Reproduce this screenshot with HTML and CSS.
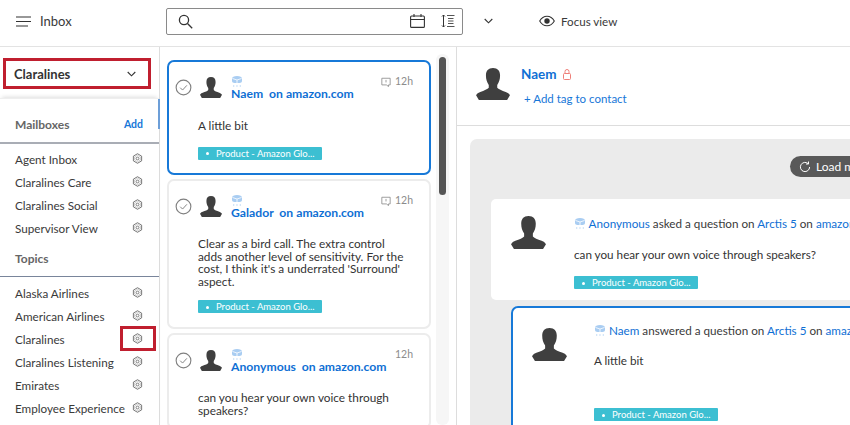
FILE: index.html
```html
<!DOCTYPE html>
<html lang="en">
<head>
<meta charset="utf-8">
<title>Inbox</title>
<link rel="stylesheet" href="styles.css">
</head>
<body>
<svg class="defs" width="0" height="0">
  <defs>
    <symbol id="avatar" viewBox="0 0 36 34">
      <path d="M18 0c5 0 7.500 3 7.500 8 0 4-1 7-3 10v3c1 1.500 5 3 9 4.500 1.500.6 3 1 4.500 3.500l-3 5H3l-3-5c1.500-2.500 3-3 4.500-3.500 4-1.500 8-3 9-4.500v-3c-2-3-3-6-3-10C10.500 3 13 0 18 0z" fill="#3f3f3f"/>
    </symbol>
    <symbol id="gear" viewBox="0 0 12 12">
      <path d="M6 .8l4.500 2.600v5.200L6 11.200 1.500 8.600V3.400z" fill="none" stroke="#6b6b6b" stroke-width="1"/>
      <path d="M6 2.400l3.100 1.800v3.600L6 9.600 2.900 7.800V4.200z" fill="none" stroke="#a5a5a5" stroke-width=".6"/>
      <circle cx="6" cy="6" r="1.500" fill="none" stroke="#6b6b6b" stroke-width=".9"/>
    </symbol>
    <symbol id="cube" viewBox="0 0 12 12">
      <path d="M1 3.500C1 2 3 1 6 1s5 1 5 2.500V6c0 1-1 2-2.500 2h-5C2 8 1 7 1 6z" fill="#a9cdf2"/>
      <path d="M1.500 3.500L6 5l4.500-1.500M6 5v3" fill="none" stroke="#fff" stroke-width=".8"/>
      <path d="M2 11h1.300M5.300 11h1.300M8.700 11H10" stroke="#a9cdf2" stroke-width="1.200"/>
    </symbol>
    <symbol id="check" viewBox="0 0 18 18">
      <circle cx="9" cy="9" r="7.800" fill="none" stroke="#808080" stroke-width="1.200"/>
      <path d="M5.500 9.200l2.500 2.500 4.600-5" fill="none" stroke="#808080" stroke-width="1"/>
    </symbol>
    <symbol id="comment" viewBox="0 0 12 12">
      <path d="M1 1.500h10v8H9v2l-2.500-2H1z" fill="none" stroke="#8c8c8c" stroke-width="1"/>
      <path d="M6 3.500v3" stroke="#8c8c8c" stroke-width="1"/>
    </symbol>
  </defs>
</svg>

<header class="topbar">
  <svg class="menu-icon" width="15" height="11" viewBox="0 0 15 11"><path d="M0 1h15M0 5.500h15M0 10h12" stroke="#333" stroke-width="1.200"/></svg>
  <span class="page-title">Inbox</span>
  <div class="search">
    <svg width="15" height="15" viewBox="0 0 15 15"><circle cx="6" cy="6" r="4.600" fill="none" stroke="#333" stroke-width="1.300"/><path d="M9.500 9.500l4.700 4.700" stroke="#333" stroke-width="1.300"/></svg>
    <span class="search-gap"></span>
    <svg width="15" height="14" viewBox="0 0 15 14"><rect x=".6" y="2" width="13.800" height="11.400" rx="1" fill="none" stroke="#333" stroke-width="1.100"/><path d="M.6 5.500h13.800M4 0v3M11 0v3" stroke="#333" stroke-width="1.100"/></svg>
    <svg class="sort-icon" width="14" height="14" viewBox="0 0 14 14"><path d="M2.500 1v12M1 2.500L2.500 1 4 2.500M1 11.500L2.500 13 4 11.500" fill="none" stroke="#333"/><path d="M6 1.500h7.500M7 4.500h5.500M7 7h5.500M7 9.500h5.500M6 12.500h7.500" stroke="#555"/></svg>
  </div>
  <svg class="chev top-chev" width="9" height="6" viewBox="0 0 9 6"><path d="M.7 1l3.800 3.800L8.300 1" fill="none" stroke="#333" stroke-width="1.100"/></svg>
  <svg class="eye" width="16" height="12" viewBox="0 0 16 12"><path d="M.7 6C2.500 2.800 5 1.200 8 1.200S13.500 2.800 15.300 6C13.500 9.200 11 10.800 8 10.800S2.500 9.200.7 6z" fill="none" stroke="#333" stroke-width="1.100"/><circle cx="8" cy="6" r="2.700" fill="#333"/></svg>
  <span class="focus">Focus view</span>
</header>

<main class="columns">
  <aside class="sidebar">
    <div class="inbox-select">
      <span>Claralines</span>
      <svg class="chev" width="9" height="6" viewBox="0 0 9 6"><path d="M.7 1l3.800 3.800L8.300 1" fill="none" stroke="#333" stroke-width="1.100"/></svg>
    </div>
    <div class="side-panel">
      <div class="side-head"><span>Mailboxes</span><a class="add">Add</a></div>
      <ul class="side-list mailboxes">
        <li>Agent Inbox<svg class="gear"><use href="#gear"/></svg></li>
        <li>Claralines Care<svg class="gear"><use href="#gear"/></svg></li>
        <li>Claralines Social<svg class="gear"><use href="#gear"/></svg></li>
        <li>Supervisor View<svg class="gear"><use href="#gear"/></svg></li>
      </ul>
      <div class="side-head topics"><span>Topics</span></div>
      <ul class="side-list">
        <li>Alaska Airlines<svg class="gear"><use href="#gear"/></svg></li>
        <li>American Airlines<svg class="gear"><use href="#gear"/></svg></li>
        <li>Claralines<span class="gear-mark"><svg class="gear"><use href="#gear"/></svg></span></li>
        <li>Claralines Listening<svg class="gear"><use href="#gear"/></svg></li>
        <li>Emirates<svg class="gear"><use href="#gear"/></svg></li>
        <li>Employee Experience<svg class="gear"><use href="#gear"/></svg></li>
      </ul>
    </div>
  </aside>

  <section class="list-col">
    <div class="cards">
      <article class="card selected">
        <div class="card-top">
          <svg class="check"><use href="#check"/></svg>
          <svg class="avatar-sm"><use href="#avatar"/></svg>
          <div class="who"><svg class="cube"><use href="#cube"/></svg><div class="name">Naem&nbsp; on amazon.com</div></div>
          <div class="age"><svg class="comment"><use href="#comment"/></svg>12h</div>
        </div>
        <p class="body">A little bit</p>
        <span class="tag">Product - Amazon Glo...</span>
      </article>
      <article class="card card-b">
        <div class="card-top">
          <svg class="check"><use href="#check"/></svg>
          <svg class="avatar-sm"><use href="#avatar"/></svg>
          <div class="who"><svg class="cube"><use href="#cube"/></svg><div class="name">Galador&nbsp; on amazon.com</div></div>
          <div class="age"><svg class="comment"><use href="#comment"/></svg>12h</div>
        </div>
        <p class="body">Clear as a bird call. The extra control adds another level of sensitivity. For the cost, I think it's a underrated 'Surround' aspect.</p>
        <span class="tag">Product - Amazon Glo...</span>
      </article>
      <article class="card">
        <div class="card-top">
          <svg class="check"><use href="#check"/></svg>
          <svg class="avatar-sm"><use href="#avatar"/></svg>
          <div class="who"><svg class="cube"><use href="#cube"/></svg><div class="name">Anonymous&nbsp; on amazon.com</div></div>
          <div class="age">12h</div>
        </div>
        <p class="body">can you hear your own voice through speakers?</p>
      </article>
    </div>
    <div class="scroll-track"><div class="scroll-thumb"></div></div>
  </section>

  <section class="detail">
    <div class="contact">
      <svg class="avatar-lg"><use href="#avatar"/></svg>
      <div class="contact-info">
        <div class="contact-name">Naem
          <svg width="8" height="11" viewBox="0 0 8 11"><rect x=".5" y="4.500" width="7" height="6" rx="1" fill="none" stroke="#ee7f78"/><path d="M2 4.500V2.500a2 2 0 0 1 4 0v2" fill="none" stroke="#ee7f78"/></svg>
        </div>
        <a class="add-tag">+ Add tag to contact</a>
      </div>
    </div>
    <div class="thread-wrap">
      <div class="thread">
        <div class="load-row"><span class="load-more">
          <svg width="12" height="12" viewBox="0 0 12 12"><path d="M10.600 6a4.600 4.600 0 1 1-1.400-3.300M9.500 .5v2.500H7" fill="none" stroke="#fff"/></svg>Load more</span></div>
        <article class="msg msg-q">
          <svg class="avatar-md"><use href="#avatar"/></svg>
          <div class="msg-body">
            <div class="msg-line"><svg class="cube"><use href="#cube"/></svg> <a>Anonymous</a> asked a question on <a>Arctis 5</a> on <a>amazon.com</a></div>
            <p class="msg-text">can you hear your own voice through speakers?</p>
            <span class="tag">Product - Amazon Glo...</span>
          </div>
        </article>
        <article class="msg msg-a">
          <svg class="avatar-md"><use href="#avatar"/></svg>
          <div class="msg-body">
            <div class="msg-line"><svg class="cube"><use href="#cube"/></svg> <a>Naem</a> answered a question on <a>Arctis 5</a> on <a>amazon.com</a></div>
            <p class="msg-text answer">A little bit</p>
            <span class="tag">Product - Amazon Glo...</span>
          </div>
        </article>
      </div>
    </div>
  </section>
</main>
</body>
</html>
```
FILE: styles.css
```css
*, *::after { box-sizing: border-box; }
html, body { margin: 0; height: 425px; overflow: hidden; }
body { font-family: Lato, "Open Sans", sans-serif; font-size: 12px; color: #333; background: #fff; }
.defs { position: absolute; }
p { margin: 0; }
ul { list-style: none; margin: 0; padding: 0; }
a { color: #0f6fd4; }

.topbar { height: 47px; display: flex; align-items: center; padding: 0 0 4px 16px; border-bottom: 1.500px solid #e3e3e3; }
.page-title { font-size: 13px; margin-left: 9px; width: 126px; color: #3a3a3a; }
.search { width: 297px; height: 27px; border: 1px solid #8a8a8a; border-radius: 2px; display: flex; align-items: center; padding: 0 7px 0 11px; }
.search-gap { flex: 1; }
.sort-icon { margin-left: 16px; }
.top-chev { margin-left: 21px; }
.eye { margin-left: 46px; }
.focus { margin-left: 6px; font-size: 11.600px; color: #3a3a3a; }

.columns { display: flex; height: 378px; overflow: hidden; }
.sidebar { width: 160px; flex: none; border-right: 1px solid #ddd; padding-top: 11px; }
.inbox-select { margin-left: 3px; width: 148px; height: 31px; border: 3px solid #c01f2f; display: flex; align-items: center; justify-content: space-between; padding: 0 12px 0 8px; font-size: 13px; font-weight: 700; color: #333; }
.side-panel { margin-top: 9px; height: 330px; box-shadow: 0 -3px 4px -2px #ddd; border-top: 1px solid #eee; position: relative; padding-top: 15px; }
.side-panel::after { content: ""; position: absolute; right: -1px; top: 0; width: 2px; height: 30px; background: #6d9fd8; }
.side-head { height: 30px; display: flex; justify-content: space-between; align-items: center; padding: 0 16px 8px 15px; font-size: 12px; font-weight: 700; color: #666; border-bottom: 2px solid #a9adb5; }
.side-head.topics { margin-top: 5px; height: 33px; padding-bottom: 4px; border-bottom: 1px solid #79859b; }
.add { font-size: 10.500px; color: #1777d8; font-weight: 700; }
.side-list { padding: 4px 0 0 15px; }
.side-list.mailboxes { padding-top: 3px; }
.side-list li { height: 23px; display: flex; align-items: center; justify-content: space-between; padding-right: 16px; font-size: 11.700px; white-space: nowrap; color: #3a3a3a; position: relative; }
.gear { width: 11px; height: 11px; flex: none; }
.gear-mark { display: flex; position: relative; }
.gear-mark::after { content: ""; position: absolute; left: -12px; top: -7px; width: 36px; height: 25px; border: 3px solid #c01f2f; }

.list-col { width: 297px; flex: none; border-right: 1px solid #ddd; display: flex; padding: 7px 6px 0 7px; }
.cards { width: 264px; flex: none; display: flex; flex-direction: column; gap: 4px; padding-top: 6px; }
.card { border: 2px solid #ececec; border-radius: 7px; padding: 12px 6px 10px 6px; flex: none; }
.card.selected { border-color: #1779d8; height: 115px; }
.card-b { height: 150px; }
.card-top { display: flex; align-items: flex-start; height: 34px; }
.check { width: 17px; height: 17px; margin-top: 5px; flex: none; }
.avatar-sm { width: 22px; height: 21px; margin: 3px 0 0 8px; flex: none; }
.who { margin-left: 9px; flex: 1; padding-top: 1px; }
.cube { width: 12px; height: 12px; display: inline-block; vertical-align: -1px; }
.who .cube { display: block; margin-bottom: -1px; }
.name { font-size: 12.200px; font-weight: 700; color: #0f6fd4; line-height: 15px; white-space: nowrap; }
.age { font-size: 10.500px; color: #8c8c8c; display: flex; align-items: center; gap: 4px; padding-right: 10px; line-height: 13px; margin-top: 1px; }
.comment { width: 10px; height: 10px; }
.body { margin: 11px 0 0 23px; width: 214px; font-size: 11.800px; line-height: 12.500px; color: #333; }
.selected .body { margin-top: 12px; }
.tag { display: block; width: 124px; height: 13px; line-height: 13px; margin: 12px 0 0 23px; background: #3cbfd2; color: #fff; font-size: 9.500px; white-space: nowrap; padding-left: 8px; border-radius: 1px; }
.selected .tag { margin-top: 14px; }
.tag::before { content: ""; display: inline-block; width: 3px; height: 3px; border-radius: 50%; background: #fff; margin-right: 7px; vertical-align: 1.500px; }

.scroll-track { width: 13px; margin-left: 5px; flex: none; background: #f6f6f6; border-radius: 6px; padding-top: 3px; }
.scroll-thumb { width: 7px; height: 138px; margin: 0 auto; background: #555; border-radius: 4px; }

.detail { flex: 1; min-width: 0; overflow: hidden; }
.contact { height: 79px; display: flex; border-bottom: 1.500px solid #ddd; padding: 21px 0 0 18px; }
.avatar-lg { width: 36px; height: 32px; flex: none; }
.contact-info { margin-left: 10px; margin-top: -3px; }
.contact-name { font-size: 13.500px; font-weight: 700; color: #0f6fd4; display: flex; align-items: center; gap: 6px; line-height: 18px; }
.add-tag { display: block; margin: 8px 0 0 3px; font-size: 11.500px; color: #1777d8; line-height: 16px; }
.thread-wrap { padding: 13px 0 0 13px; }
.thread { width: 520px; height: 320px; background: #ebebeb; border-radius: 7px; padding: 17px 0 0 21px; overflow: hidden; }
.load-row { padding-left: 299px; height: 21px; margin-bottom: 22px; white-space: nowrap; }
.load-more { display: inline-flex; align-items: center; gap: 5px; height: 21px; width: 100px; padding-left: 9px; border-radius: 11px; background: #595959; color: #fff; font-size: 12px; }
.msg { display: flex; background: #fff; white-space: nowrap; }
.msg-q { height: 101px; border-radius: 5px; padding: 17px 0 0 20px; }
.msg-a { height: 130px; margin: 6px 0 0 20px; border: 2px solid #1779d8; border-radius: 7px; padding: 20px 0 0 19px; }
.avatar-md { width: 35px; height: 33px; flex: none; }
.msg-body { margin-left: 28px; }
.msg-a .msg-body { margin-left: 27px; margin-top: -5px; }
.msg-line { font-size: 11.700px; line-height: 14px; color: #3a3a3a; }
.msg-line .cube { margin-right: 0; }
.msg-text { margin-top: 17px; font-size: 11.700px; line-height: 14px; color: #333; }
.msg-text.answer { margin-top: 16px; margin-bottom: 41px; }
.msg .tag { margin: 15px 0 0 0; }
.msg-a .tag { margin-top: 0; }
```
